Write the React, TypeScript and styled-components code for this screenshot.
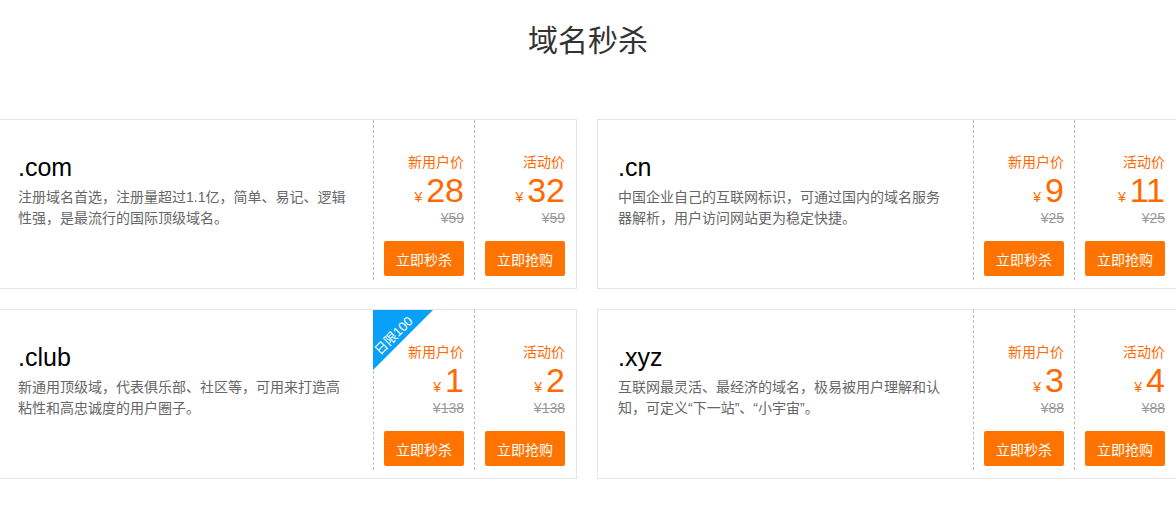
import React from 'react';
import styled, { createGlobalStyle } from 'styled-components';

const GlobalStyle = createGlobalStyle`
  html, body {
    margin: 0;
    padding: 0;
    background: #fff;
  }
  body {
    font-family: "Liberation Sans", "Noto Sans CJK SC", Arial, sans-serif;
    overflow: hidden;
  }
  * {
    box-sizing: border-box;
  }
`;

const Page = styled.div`
  width: 1176px;
  overflow: hidden;
`;

const Heading = styled.h2`
  margin: 0 0 58px;
  padding-top: 21px;
  font-size: 30px;
  line-height: 40px;
  font-weight: 400;
  color: #333;
  text-align: center;
`;

const Grid = styled.div`
  display: grid;
  grid-template-columns: 580px 580px;
  gap: 20px;
  width: 1180px;
  margin-left: -3px;
`;

const Card = styled.div`
  display: flex;
  height: 170px;
  padding-right: 1px;
  border: 1px solid #e6e6e6;
  background: #fff;
`;

const Info = styled.div`
  flex: 1;
  min-width: 0;
  padding: 32px 21px 0 20px;
`;

const DomainName = styled.div`
  font-size: 25px;
  line-height: 30px;
  color: #000;
`;

const Desc = styled.p`
  margin: 5px 0 0;
  font-size: 14px;
  line-height: 21px;
  color: #666;
`;

const PriceCol = styled.div`
  position: relative;
  width: 101px;
  height: 160px;
  padding: 32px 10px 0;
  border-left: 1px dashed #bbb;
  display: flex;
  flex-direction: column;
  align-items: flex-end;
`;

const Label = styled.div`
  font-size: 14px;
  line-height: 20px;
  color: #ff6a00;
`;

const Price = styled.div`
  color: #ff6a00;
  font-size: 34px;
  line-height: 36px;
  white-space: nowrap;
`;

const Yen = styled.span`
  font-size: 14px;
  line-height: 1;
  margin-right: 4px;
`;

const Original = styled.div`
  font-size: 14px;
  line-height: 20px;
  color: #999;
  text-decoration: line-through;
`;

const BuyButton = styled.button`
  margin-top: 13px;
  width: 80px;
  height: 35px;
  padding: 0;
  border: none;
  border-radius: 2px;
  background: #ff7300;
  color: #fff;
  font-family: inherit;
  font-size: 14px;
  cursor: pointer;

  :hover {
    opacity: 0.9;
  }
`;

const Badge = styled.div`
  position: absolute;
  top: 0;
  left: -1px;
  width: 0;
  height: 0;
  border-top: 60px solid #08a0f8;
  border-right: 60px solid transparent;
  pointer-events: none;

  span {
    position: absolute;
    top: -41px;
    left: -4px;
    width: 50px;
    font-size: 13px;
    line-height: 14px;
    color: #fff;
    text-align: center;
    white-space: nowrap;
    transform: rotate(-45deg);
  }
`;

interface Domain {
  name: string;
  desc: string;
  newPrice: number;
  salePrice: number;
  original: number;
  badge?: string;
}

const domains: Domain[] = [
  {
    name: '.com',
    desc: '注册域名首选，注册量超过1.1亿，简单、易记、逻辑性强，是最流行的国际顶级域名。',
    newPrice: 28,
    salePrice: 32,
    original: 59,
  },
  {
    name: '.cn',
    desc: '中国企业自己的互联网标识，可通过国内的域名服务器解析，用户访问网站更为稳定快捷。',
    newPrice: 9,
    salePrice: 11,
    original: 25,
  },
  {
    name: '.club',
    desc: '新通用顶级域，代表俱乐部、社区等，可用来打造高粘性和高忠诚度的用户圈子。',
    newPrice: 1,
    salePrice: 2,
    original: 138,
    badge: '日限100',
  },
  {
    name: '.xyz',
    desc: '互联网最灵活、最经济的域名，极易被用户理解和认知，可定义“下一站”、“小宇宙”。',
    newPrice: 3,
    salePrice: 4,
    original: 88,
  },
];

const PriceBox = ({
  label,
  price,
  original,
  action,
  badge,
}: {
  label: string;
  price: number;
  original: number;
  action: string;
  badge?: string;
}) => (
  <PriceCol>
    {!!badge && (
      <Badge>
        <span>{badge}</span>
      </Badge>
    )}
    <Label>{label}</Label>
    <Price>
      <Yen>¥</Yen>
      {price}
    </Price>
    <Original>¥{original}</Original>
    <BuyButton>{action}</BuyButton>
  </PriceCol>
);

const App = () => (
  <Page>
    <GlobalStyle />
    <Heading>域名秒杀</Heading>
    <Grid>
      {domains.map((d) => (
        <Card key={d.name}>
          <Info>
            <DomainName>{d.name}</DomainName>
            <Desc>{d.desc}</Desc>
          </Info>
          <PriceBox
            label="新用户价"
            price={d.newPrice}
            original={d.original}
            action="立即秒杀"
            badge={d.badge}
          />
          <PriceBox label="活动价" price={d.salePrice} original={d.original} action="立即抢购" />
        </Card>
      ))}
    </Grid>
  </Page>
);

export default App;
